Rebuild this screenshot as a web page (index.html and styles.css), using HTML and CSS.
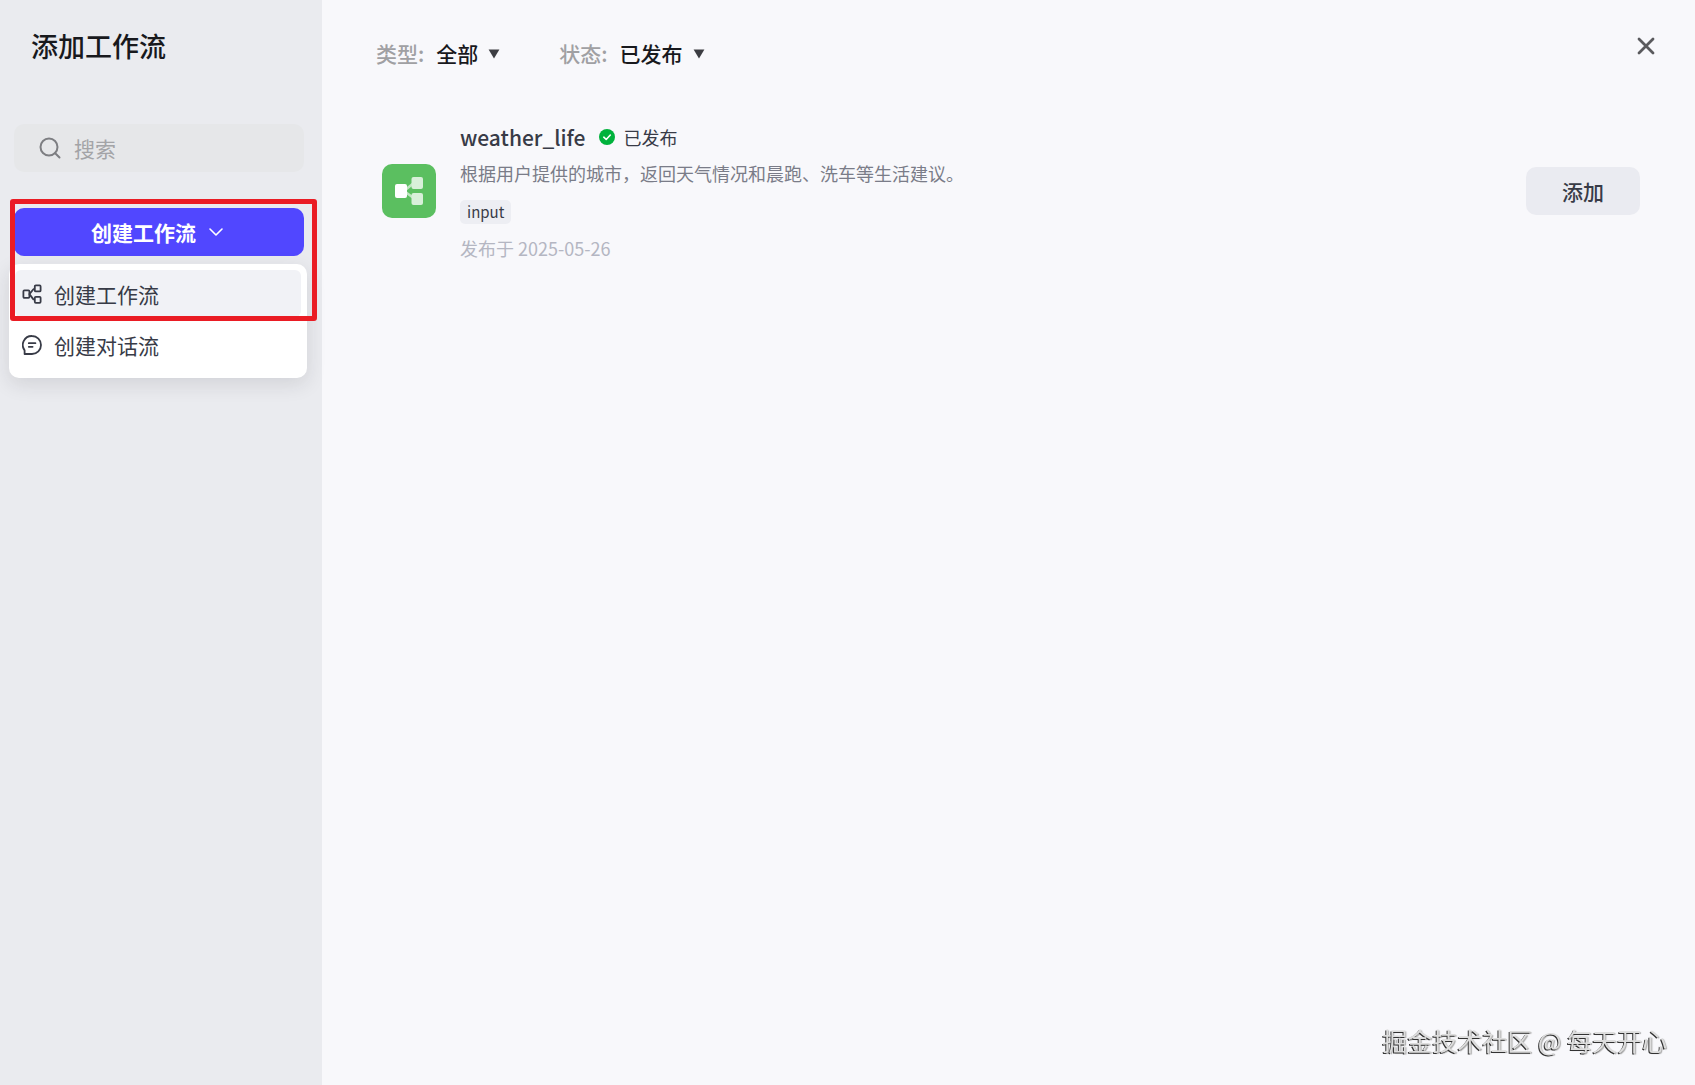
FILE: index.html
```html
<!DOCTYPE html>
<html lang="zh-CN">
<head>
    <meta charset="UTF-8">
    <meta name="viewport" content="width=device-width, initial-scale=1.0">
    <title>添加工作流</title>
    <link rel="stylesheet" href="styles.css">
</head>
<body>
    <aside class="sidebar">
        <h1 class="sidebar-title">添加工作流</h1>
        <label class="search">
            <svg class="search-icon" viewBox="0 0 22 22" fill="none" stroke="currentColor" stroke-width="2" stroke-linecap="round">
                <circle cx="10" cy="10" r="8.5"/>
                <path d="M16.2 16.2L20.5 20.5"/>
            </svg>
            <input class="search-input" type="text" placeholder="搜索" aria-label="搜索">
        </label>
        <div class="create">
            <button class="create-button" type="button" aria-haspopup="menu" aria-expanded="true">
                创建工作流
                <svg class="chevron" viewBox="0 0 14 8" fill="none" stroke="currentColor" stroke-width="1.6" stroke-linecap="round" stroke-linejoin="round">
                    <path d="M1 1L7 7L13 1"/>
                </svg>
            </button>
            <div class="menu" role="menu">
                <button class="menu-item active" type="button" role="menuitem">
                    <svg class="menu-icon" viewBox="0 0 20 20" fill="none" stroke="currentColor" stroke-width="1.8" stroke-linejoin="round">
                        <rect x="1.4" y="6.4" width="6" height="7.4" rx="1"/>
                        <rect x="12.8" y="1.4" width="5.8" height="6" rx="1"/>
                        <rect x="12.8" y="12.8" width="5.8" height="6" rx="1"/>
                        <path d="M12.8 5.2H11.4L7.4 10.1L11.4 15.4H12.8"/>
                    </svg>
                    创建工作流
                </button>
                <button class="menu-item" type="button" role="menuitem">
                    <svg class="menu-icon" viewBox="0 0 20 20" fill="none" stroke="currentColor" stroke-width="1.8" stroke-linecap="round" stroke-linejoin="round">
                        <path d="M10 1A9 9 0 1 1 10 19H2.6V15.4A9 9 0 0 1 10 1Z"/>
                        <path d="M6.8 8.2H13.4M6.8 11.8H10.6"/>
                    </svg>
                    创建对话流
                </button>
            </div>
            <div class="marker"></div>
        </div>
    </aside>

    <main class="content">
        <header class="toolbar">
            <div class="filter">
                <label class="filter-label" for="type">类型:</label>
                <select class="filter-select" id="type">
                    <option>全部</option>
                </select>
                <svg class="caret" viewBox="0 0 12 12" fill="currentColor"><path d="M0.6 2.5H11.4L6 11.5Z"/></svg>
            </div>
            <div class="filter">
                <label class="filter-label" for="status">状态:</label>
                <select class="filter-select" id="status">
                    <option>已发布</option>
                </select>
                <svg class="caret" viewBox="0 0 12 12" fill="currentColor"><path d="M0.6 2.5H11.4L6 11.5Z"/></svg>
            </div>
            <button class="close" type="button" aria-label="关闭">
                <svg viewBox="0 0 18 18" fill="none" stroke="currentColor" stroke-width="2.8" stroke-linecap="round">
                    <path d="M2 2L16 16M16 2L2 16"/>
                </svg>
            </button>
        </header>

        <article class="workflow">
            <svg class="workflow-icon" viewBox="0 0 54 54">
                <rect width="54" height="54" rx="10" fill="#5bbf60"/>
                <path d="M22 27L33 18M22 27L33 35" stroke="#bfe6c1" stroke-width="2.6"/>
                <rect x="29.5" y="13" width="11.5" height="12" rx="2" fill="#d8f0d9"/>
                <rect x="29.5" y="29" width="11.5" height="12" rx="2" fill="#d8f0d9"/>
                <rect x="13" y="20" width="12" height="14" rx="2" fill="#fff"/>
            </svg>
            <div class="workflow-info">
                <div class="workflow-head">
                    <h2 class="workflow-name">weather_life</h2>
                    <svg class="check" viewBox="0 0 16 16">
                        <circle cx="8" cy="8" r="8" fill="#00b23c"/>
                        <path d="M4.8 8.2L7.2 10.5L11.3 6" fill="none" stroke="#fff" stroke-width="1.6" stroke-linecap="round" stroke-linejoin="round"/>
                    </svg>
                    <span class="workflow-status">已发布</span>
                </div>
                <p class="workflow-desc">根据用户提供的城市，返回天气情况和晨跑、洗车等生活建议。</p>
                <span class="tag">input</span>
                <p class="workflow-date">发布于 2025-05-26</p>
            </div>
            <button class="add-button" type="button">添加</button>
        </article>
    </main>

    <div class="watermark">掘金技术社区 @ 每天开心</div>
</body>
</html>
```
FILE: styles.css
```css
* {
    box-sizing: border-box;
}
body {
    margin: 0;
    min-height: 100vh;
    display: flex;
    background: #f8f8fb;
    font-family: 'Noto Sans CJK SC', sans-serif;
    color: #18191d;
}
h1, h2, p {
    margin: 0;
}
button, input, select {
    border: 0;
    padding: 0;
    background: none;
    font-family: inherit;
    color: inherit;
}
button {
    cursor: pointer;
}
svg {
    display: block;
    flex-shrink: 0;
}
.sidebar {
    width: 322px;
    flex-shrink: 0;
    padding: 27px 18px 0 14px;
    background: #eaebef;
}
.sidebar-title {
    margin-bottom: 59px;
    padding-left: 17px;
    font-size: 27px;
    line-height: 38px;
    font-weight: 500;
}
.search {
    display: flex;
    align-items: center;
    gap: 13px;
    height: 48px;
    padding: 0 25px;
    border-radius: 10px;
    background: #e6e7e9;
}
.search-icon {
    width: 22px;
    height: 22px;
    color: #7d7e82;
}
.search-input {
    flex: 1;
    min-width: 0;
    font-size: 21px;
    line-height: 32px;
    outline: none;
}
.search-input::placeholder {
    color: #a3a4a7;
}
.create {
    position: relative;
    margin-top: 36px;
}
.create-button {
    display: flex;
    align-items: center;
    justify-content: center;
    gap: 13px;
    width: 100%;
    height: 48px;
    padding-right: 4px;
    border-radius: 10px;
    background: #5147ff;
    color: #fff;
    font-size: 21px;
    font-weight: 700;
}
.chevron {
    width: 14px;
    height: 8px;
}
.menu {
    position: absolute;
    top: 56px;
    left: -5px;
    right: -3px;
    display: flex;
    flex-direction: column;
    gap: 4px;
    padding: 6px 6px 10px;
    border-radius: 10px;
    background: #fff;
    box-shadow: 0 6px 20px rgba(30, 32, 40, 0.12);
}
.menu-item {
    display: flex;
    align-items: center;
    gap: 12px;
    height: 47px;
    padding: 0 7px;
    border-radius: 6px;
    font-size: 21px;
    line-height: 32px;
    color: #383b47;
}
.menu-item.active {
    background: #f1f2f6;
}
.menu-icon {
    width: 20px;
    height: 20px;
}
.marker {
    position: absolute;
    top: -9px;
    left: -4px;
    right: -13px;
    height: 122px;
    border: 5px solid #ea1c24;
    border-radius: 3px;
    pointer-events: none;
}
.content {
    flex: 1;
    min-width: 0;
    padding: 28px 40px 0 54px;
}
.toolbar {
    display: flex;
    align-items: flex-start;
    gap: 59px;
}
.filter {
    display: flex;
    align-items: center;
    gap: 12px;
    padding-top: 9px;
    font-size: 21px;
    line-height: 32px;
    font-weight: 500;
}
.filter-label {
    color: #a0a0a3;
}
.filter-select {
    appearance: none;
    field-sizing: content;
    font-size: 21px;
    line-height: 32px;
    font-weight: 500;
    outline: none;
}
.caret {
    width: 12px;
    height: 12px;
    margin-left: -2px;
    color: #3c3d42;
}
.close {
    margin-left: auto;
    padding: 9px 0;
    color: #5a5a5d;
}
.close svg {
    width: 18px;
    height: 18px;
}
.workflow {
    display: flex;
    align-items: center;
    gap: 24px;
    margin-top: 52px;
    padding: 0 15px 0 6px;
}
.workflow-icon {
    width: 54px;
    height: 54px;
}
.workflow-info {
    flex: 1;
    min-width: 0;
}
.workflow-head {
    display: flex;
    align-items: center;
    height: 32px;
}
.workflow-name {
    margin-right: 14px;
    font-size: 21px;
    font-weight: 500;
    color: #383b47;
}
.check {
    width: 16px;
    height: 16px;
    margin-right: 8px;
}
.workflow-status {
    font-size: 18px;
    color: #383b47;
}
.workflow-desc {
    margin: 6px 0 13px;
    font-size: 18px;
    line-height: 28px;
    color: #7a7c88;
}
.tag {
    display: block;
    width: fit-content;
    padding: 0 7px;
    border-radius: 5px;
    background: #edeef3;
    font-size: 15px;
    line-height: 24px;
    color: #383b47;
}
.workflow-date {
    margin-top: 12px;
    font-size: 18px;
    line-height: 24px;
    color: #b4b6c2;
}
.add-button {
    width: 114px;
    height: 48px;
    border-radius: 10px;
    background: #eaebf1;
    font-size: 21px;
    font-weight: 500;
    color: #383b47;
}
.watermark {
    position: fixed;
    right: 28px;
    bottom: 27px;
    font-size: 25px;
    line-height: 36px;
    color: #ddd;
    text-shadow: -1px 1px 0 #333, 1px 1px 1px #aaa;
}
```
